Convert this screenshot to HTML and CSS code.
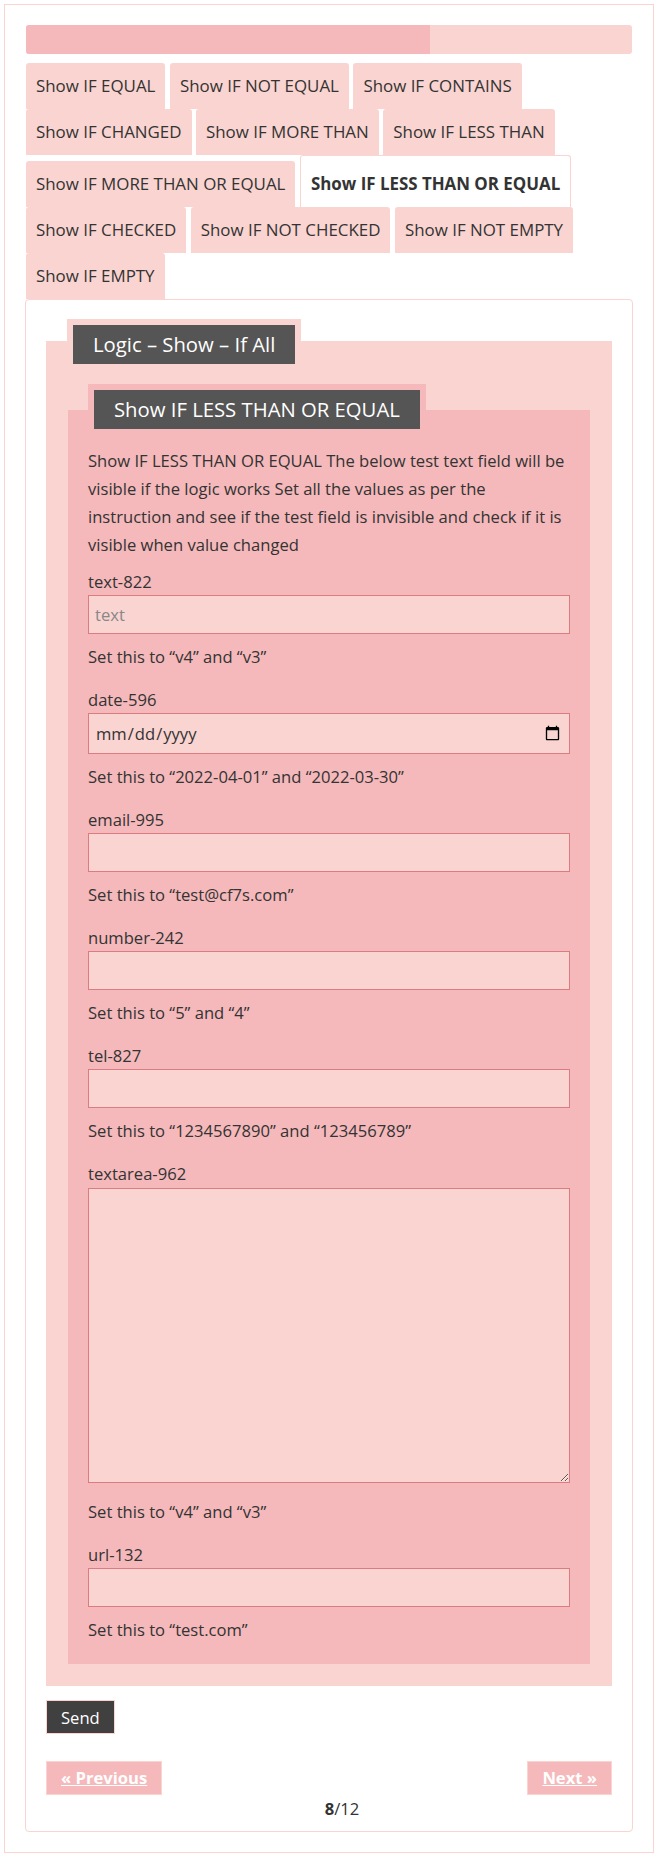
FILE: index.html
```html
<!DOCTYPE html>
<html lang="en">
<head>
    <meta charset="UTF-8">
    <meta name="viewport" content="width=device-width, initial-scale=1.0">
    <title>Logic - Show - If All</title>
    <link rel="stylesheet" href="styles.css">
</head>
<body>
    <div class="wrap">
        <div class="progress">
            <div class="progress-fill" style="width: 66.67%"></div>
        </div>

        <ul class="tabs">
            <li>Show IF EQUAL</li>
            <li>Show IF NOT EQUAL</li>
            <li>Show IF CONTAINS</li>
            <li>Show IF CHANGED</li>
            <li>Show IF MORE THAN</li>
            <li>Show IF LESS THAN</li>
            <li>Show IF MORE THAN OR EQUAL</li>
            <li class="active">Show IF LESS THAN OR EQUAL</li>
            <li>Show IF CHECKED</li>
            <li>Show IF NOT CHECKED</li>
            <li>Show IF NOT EMPTY</li>
            <li>Show IF EMPTY</li>
        </ul>

        <div class="card">
            <div class="fset outer">
                <div class="legend"><span>Logic – Show – If All</span></div>

                <div class="fset inner">
                    <div class="legend"><span>Show IF LESS THAN OR EQUAL</span></div>

                    <p class="intro">Show IF LESS THAN OR EQUAL The below test text field will be visible if the logic works Set all the values as per the instruction and see if the test field is invisible and check if it is visible when value changed</p>

                    <div class="field">
                        <label for="text-822">text-822</label>
                        <input type="text" id="text-822" placeholder="text">
                        <p class="note">Set this to “v4” and “v3”</p>
                    </div>
                    <div class="field">
                        <label for="date-596">date-596</label>
                        <input type="date" id="date-596" class="date">
                        <p class="note">Set this to “2022-04-01” and “2022-03-30”</p>
                    </div>
                    <div class="field">
                        <label for="email-995">email-995</label>
                        <input type="email" id="email-995">
                        <p class="note">Set this to “test@cf7s.com”</p>
                    </div>
                    <div class="field">
                        <label for="number-242">number-242</label>
                        <input type="number" id="number-242">
                        <p class="note">Set this to “5” and “4”</p>
                    </div>
                    <div class="field">
                        <label for="tel-827">tel-827</label>
                        <input type="tel" id="tel-827">
                        <p class="note">Set this to “1234567890” and “123456789”</p>
                    </div>
                    <div class="field">
                        <label for="textarea-962">textarea-962</label>
                        <textarea id="textarea-962"></textarea>
                        <p class="note after-area">Set this to “v4” and “v3”</p>
                    </div>
                    <div class="field">
                        <label for="url-132">url-132</label>
                        <input type="url" id="url-132">
                        <p class="note">Set this to “test.com”</p>
                    </div>
                </div>
            </div>

            <button class="send">Send</button>

            <div class="pager">
                <a href="#" class="page-btn">« Previous</a>
                <a href="#" class="page-btn">Next »</a>
            </div>
            <div class="count"><b>8</b>/12</div>
        </div>
    </div>
</body>
</html>
```

FILE: styles.css
```css
*{
    box-sizing: border-box;
    margin: 0px;
    padding: 0px;
}

html{
    font-family: 'Open Sans', 'Noto Sans', sans-serif;
    font-size: 16.6px;
    color: #333;
}

body{
    background-color: white;
}

.wrap{
    margin: 4px 6px 4px 4px;
    border: solid #fad4d0 1px;
    padding: 20px 20px;
}

.progress{
    height: 29px;
    margin: 0 1px;
    border-radius: 3px;
    background-color: #fad4d0;
    overflow: hidden;
}

.progress-fill{
    height: 100%;
    background-color: #f5b9bb;
}

.tabs{
    display: flex;
    flex-wrap: wrap;
    align-items: flex-end;
    column-gap: 4.5px;
    list-style: none;
    margin-top: 9px;
    padding-left: 1px;
    font-size: 16.9px;
    li{
        height: 46px;
        line-height: 46px;
        padding: 0 10px;
        background-color: #fad4d0;
        border-radius: 3px 3px 0 0;
        white-space: nowrap;
    }
    li.active{
        height: 52px;
        padding-top: 5px;
        border: solid #fad4d0 1px;
        border-bottom: none;
        background-color: white;
        font-weight: 700;
        line-height: 46px;
    }
}

.card{
    border: solid #fad4d0 1px;
    border-radius: 4px;
    padding: 41px 20px 8px;
}

.fset{
    display: flex;
    flex-direction: column;
    padding: 0 22px 22px;
    background-color: #fad4d0;
}

.legend{
    align-self: flex-start;
    padding: 6px;
    margin: -22px 0 0 -1px;
    background-color: #fad4d0;
    span{
        display: block;
        height: 39px;
        line-height: 39px;
        padding: 0 20px;
        background-color: #555;
        color: white;
        font-size: 20.3px;
    }
}

.fset.inner{
    margin-top: 40px;
    padding: 0 20px 20px;
    background-color: #f5b9bb;
    .legend{
        margin: -26px 0 0 0;
        background-color: #f5b9bb;
    }
}

.intro{
    margin-top: 12px;
    line-height: 28px;
}

.field{
    display: flex;
    flex-direction: column;
    margin-top: 10px;
    & + .field{
        margin-top: 16px;
    }
    label{
        line-height: 26px;
    }
}

input, textarea{
    width: 100%;
    height: 39px;
    padding: 0 6px;
    font-family: inherit;
    font-size: 16.6px;
    color: #333;
    background-color: #fad4d0;
    border: solid #db7c82 1px;
    border-radius: 0;
}

input::placeholder{
    color: #888;
}

input.date{
    height: 41px;
}

textarea{
    height: 295px;
    margin-top: 1px;
    resize: vertical;
}

.note{
    margin-top: 9px;
    line-height: 28px;
}

.note.after-area{
    margin-top: 15px;
}

.send{
    margin-top: 14px;
    height: 34px;
    padding: 0 14px;
    font-family: inherit;
    font-size: 16.6px;
    color: white;
    background-color: #404040;
    border: solid #fad4d0 1px;
    cursor: pointer;
}

.pager{
    display: flex;
    justify-content: space-between;
    margin-top: 27px;
}

.page-btn{
    display: block;
    height: 34px;
    line-height: 32px;
    padding: 0 14px;
    font-weight: 700;
    font-size: 16.6px;
    color: white;
    background-color: #f5b9bb;
    border: solid #fad4d0 1px;
}

.count{
    line-height: 28px;
    text-align: center;
    padding-left: 26px;
}
```
